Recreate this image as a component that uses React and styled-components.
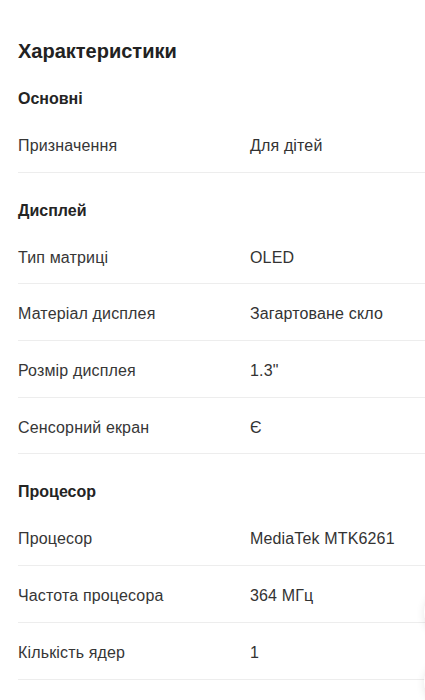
import React from "react";
import styled, { createGlobalStyle } from "styled-components";

const Global = createGlobalStyle`
  html, body { margin: 0; padding: 0; background: #fff; }
  body {
    font-family: "Liberation Sans", Arial, Helvetica, sans-serif;
    color: #333;
    -webkit-font-smoothing: antialiased;
    overflow-x: hidden;
  }
`;

const Page = styled.div`
  width: 425px;
  min-height: 700px;
  overflow: hidden;
  position: relative;
`;

const Title = styled.h2`
  margin: 0;
  padding: 41px 18px 0;
  font-size: 20px;
  line-height: 20px;
  font-weight: 700;
  color: #222;
`;

const Section = styled.section`
  display: flex;
  flex-direction: column;
`;

const SectionTitle = styled.h3`
  margin: 0;
  padding: 28px 18px 7px;
  font-size: 16px;
  line-height: 20px;
  font-weight: 700;
  color: #242424;
`;

const Row = styled.div`
  display: grid;
  grid-template-columns: 232px 1fr;
  margin-left: 18px;
  padding: 20px 0 15.7px;
  border-bottom: 1px solid #ededed;
  font-size: 16px;
  line-height: 20px;
  letter-spacing: 0.15px;
`;

const Label = styled.span`
  color: #363636;
`;

const Value = styled.span`
  color: #333;
`;

const FloatingButton = styled.div`
  position: fixed;
  right: -47px;
  top: ${(p) => p.$top}px;
  width: 48px;
  height: 48px;
  border-radius: 50%;
  background: #fff;
  box-shadow: 0 2px 8px rgba(0, 0, 0, 0.1);
`;

const data = [
  {
    title: "Основні",
    rows: [["Призначення", "Для дітей"]],
  },
  {
    title: "Дисплей",
    rows: [
      ["Тип матриці", "OLED"],
      ["Матеріал дисплея", "Загартоване скло"],
      ["Розмір дисплея", "1.3\""],
      ["Сенсорний екран", "Є"],
    ],
  },
  {
    title: "Процесор",
    rows: [
      ["Процесор", "MediaTek MTK6261"],
      ["Частота процесора", "364 МГц"],
      ["Кількість ядер", "1"],
    ],
  },
];

export default function App() {
  return (
    <Page>
      <Global />
      <Title>Характеристики</Title>
      {data.map((s) => (
        <Section key={s.title}>
          <SectionTitle>{s.title}</SectionTitle>
          {s.rows.map(([l, v]) => (
            <Row key={l}>
              <Label>{l}</Label>
              <Value>{v}</Value>
            </Row>
          ))}
        </Section>
      ))}
      <FloatingButton $top={588} />
      <FloatingButton $top={658} />
    </Page>
  );
}
